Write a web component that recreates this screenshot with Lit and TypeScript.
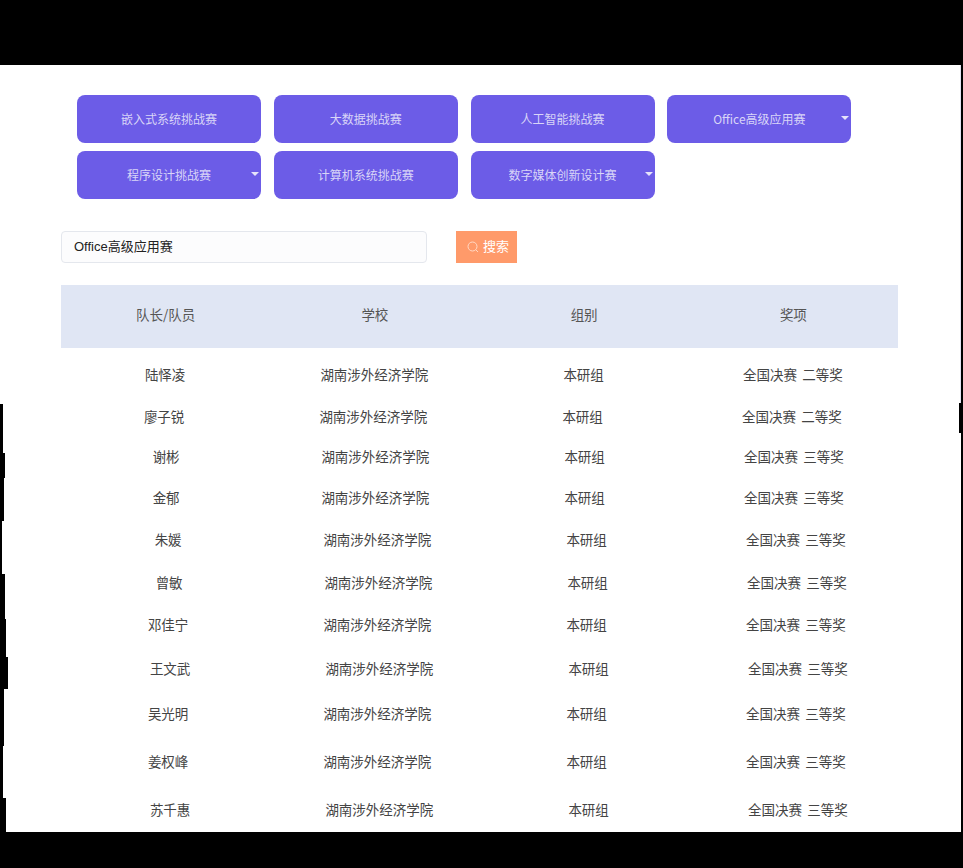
import { LitElement, html, css } from "lit";
import { customElement } from "lit/decorators.js";

const TAGS = [
  { t: "嵌入式系统挑战赛", arrow: false },
  { t: "大数据挑战赛", arrow: false },
  { t: "人工智能挑战赛", arrow: false },
  { t: "Office高级应用赛", arrow: true },
  { t: "程序设计挑战赛", arrow: true },
  { t: "计算机系统挑战赛", arrow: false },
  { t: "数字媒体创新设计赛", arrow: true },
];

const ROWS = [
  { n: "陆怿凌", a: "全国决赛 二等奖", h: 54, s: 0 },
  { n: "廖子锐", a: "全国决赛 二等奖", h: 30, s: -1 },
  { n: "谢彬", a: "全国决赛 三等奖", h: 50, s: 1 },
  { n: "金郁", a: "全国决赛 三等奖", h: 32, s: 1 },
  { n: "朱媛", a: "全国决赛 三等奖", h: 52, s: 3 },
  { n: "曾敏", a: "全国决赛 三等奖", h: 34, s: 4 },
  { n: "邓佳宁", a: "全国决赛 三等奖", h: 50, s: 3 },
  { n: "王文武", a: "全国决赛 三等奖", h: 38, s: 5 },
  { n: "吴光明", a: "全国决赛 三等奖", h: 52, s: 3 },
  { n: "姜权峰", a: "全国决赛 三等奖", h: 44, s: 3 },
  { n: "苏千惠", a: "全国决赛 三等奖", h: 52, s: 5 },
];

const EDGE = [
  { h: 339, w: 0 },
  { h: 49, w: 3 },
  { h: 25, w: 5 },
  { h: 43, w: 4 },
  { h: 53, w: 2 },
  { h: 45, w: 5 },
  { h: 38, w: 6 },
  { h: 32, w: 8 },
  { h: 57, w: 4 },
  { h: 52, w: 3 },
  { h: 35, w: 6 },
];

@customElement("app-root")
export class AppRoot extends LitElement {
  static styles = css`
    :host {
      display: block;
      width: 963px;
      height: 868px;
      background: #000;
      font-family: "Noto Sans CJK SC", "Noto Sans", sans-serif;
      padding: 65px 2px 36px 0;
      box-sizing: border-box;
    }
    .panel {
      position: relative;
      height: 767px;
      background: #fff;
      overflow: hidden;
      box-sizing: border-box;
      padding-top: 30px;
    }
    .rule {
      position: absolute;
      top: 0;
      right: 0;
      width: 1px;
      height: 338px;
      background: #e3e3f3;
    }
    .notch {
      position: absolute;
      top: 338px;
      right: 0;
      width: 2px;
      height: 30px;
      background: #000;
    }
    .edge {
      position: absolute;
      top: 0;
      left: 0;
      display: flex;
      flex-direction: column;
    }
    .edge i {
      display: block;
      background: #000;
    }
    .tags {
      display: grid;
      grid-template-columns: repeat(4, 184px);
      grid-auto-rows: 48px;
      gap: 8px 12.8px;
      margin-left: 77px;
    }
    .tag {
      position: relative;
      display: flex;
      align-items: center;
      justify-content: center;
      box-sizing: border-box;
      padding-bottom: 2px;
      background: #6c5ce7;
      border-radius: 8px;
      color: #d9d5f7;
      font-size: 12px;
    }
    .tag.arrow::after {
      content: "";
      position: absolute;
      right: 2px;
      top: 21px;
      border-style: solid;
      border-width: 4px 4px 0;
      border-color: #e6e3fa transparent transparent;
    }
    .search {
      display: flex;
      margin: 32px 0 0 61px;
      height: 32px;
    }
    .input {
      box-sizing: border-box;
      width: 366px;
      border: 1px solid #e4e7ed;
      border-radius: 4px;
      background: #fcfcfd;
      color: #222;
      font-family: "Liberation Sans", "Noto Sans CJK SC", sans-serif;
      font-size: 13px;
      line-height: 29px;
      padding-left: 12px;
    }
    .btn {
      display: flex;
      align-items: center;
      gap: 4px;
      box-sizing: border-box;
      width: 61px;
      margin-left: 29px;
      padding: 0 0 3px 11px;
      background: #ff9a6a;
      color: #fff;
      font-size: 13px;
    }
    .btn svg {
      display: block;
      margin-top: 2px;
    }
    .thead,
    .row {
      display: grid;
      grid-template-columns: repeat(4, 209.25px);
      width: 837px;
      margin-left: 61px;
      text-align: center;
      font-size: 13.5px;
      color: #444;
    }
    .thead {
      margin-top: 22px;
      height: 63px;
      line-height: 58px;
      background: #e0e6f4;
      color: #555;
    }
    .row {
      box-sizing: border-box;
      align-items: center;
      padding-bottom: 2px;
      margin-left: 60.5px;
      word-spacing: 2px;
    }
  `;

  render() {
    return html`
      <div class="panel">
        <div class="tags">
          ${TAGS.map(
            (t) => html`<div class="tag ${t.arrow ? "arrow" : ""}">${t.t}</div>`
          )}
        </div>
        <div class="search">
          <div class="input">Office高级应用赛</div>
          <div class="btn">
            <svg width="12" height="12" viewBox="0 0 12 12" fill="none" stroke="#ffd9c6" stroke-width="1">
              <circle cx="5.5" cy="5.5" r="4.5"></circle>
              <path d="M8.8 8.8 L11 11"></path>
            </svg>
            <span>搜索</span>
          </div>
        </div>
        <div class="thead">
          <div>队长/队员</div>
          <div>学校</div>
          <div>组别</div>
          <div>奖项</div>
        </div>
        ${ROWS.map(
          (r) => html`
            <div class="row" style="height:${r.h}px;transform:translateX(${r.s}px)">
              <div>${r.n}</div>
              <div>湖南涉外经济学院</div>
              <div>本研组</div>
              <div>${r.a}</div>
            </div>
          `
        )}
        <div class="rule"></div>
        <div class="notch"></div>
        <div class="edge">
          ${EDGE.map(
            (e) => html`<i style="height:${e.h}px;width:${e.w}px"></i>`
          )}
        </div>
      </div>
    `;
  }
}
